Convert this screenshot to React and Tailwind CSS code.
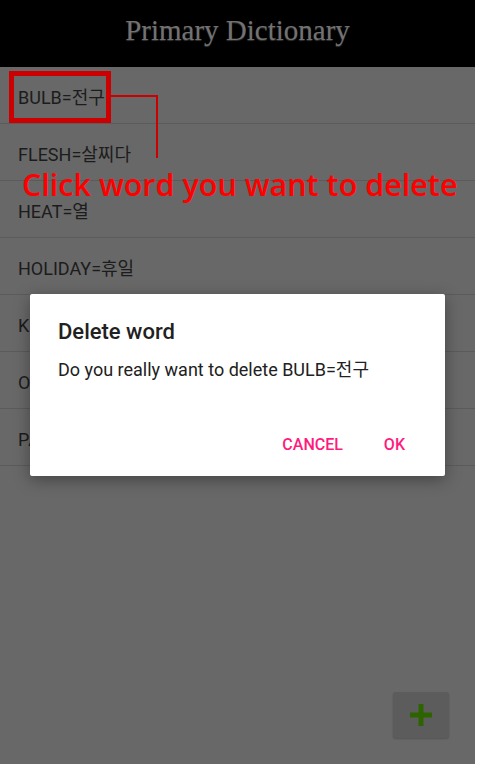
import React from "react";

const words = [
  "BULB=전구",
  "FLESH=살찌다",
  "HEAT=열",
  "HOLIDAY=휴일",
  "KNIFE=칼",
  "OCEAN=바다",
  "PAPER=종이",
];

const App = () => {
  return (
    <div className="w-[480px] h-[764px] bg-white overflow-hidden">
      <div className="relative w-[475px] h-[764px] bg-[#686868] flex flex-col font-['Roboto','Noto_Sans_CJK_KR',sans-serif]">
        {/* action bar */}
        <div className="h-[67px] shrink-0 bg-black flex items-center justify-center pb-[5px]">
          <div className="font-['Liberation_Serif',serif] text-[29px] text-[#727272] [text-shadow:0_1px_1px_#333]">
            Primary Dictionary
          </div>
        </div>

        {/* word list */}
        <div className="flex flex-col">
          {words.map((w) => (
            <div key={w} className="h-[57px] flex items-center pl-[18px] pt-[4px] border-b border-[#5b5b5b] text-[18px] text-[#1c1c1c]">
              {w}
            </div>
          ))}
        </div>

        {/* annotation */}
        <div className="absolute left-[9px] top-[71px] w-[102px] h-[52px] border-[5px] border-[#cc0000]"></div>
        <div className="absolute left-[111px] top-[95px] w-[47px] h-[2px] bg-[#cc0000]"></div>
        <div className="absolute left-[156px] top-[95px] w-[2px] h-[63px] bg-[#cc0000]"></div>
        <div className="absolute left-[22px] top-[164px] font-['Open_Sans',sans-serif] font-semibold text-[30.5px] leading-[40px] text-[#ff0000] whitespace-nowrap">
          Click word you want to delete
        </div>

        {/* dialog */}
        <div className="absolute left-[30px] top-[294px] w-[415px] h-[182px] bg-white rounded-[2px] shadow-[0_4px_16px_rgba(0,0,0,0.35)] flex flex-col">
          <div className="pl-[28px] pt-[23px] text-[22px] font-medium text-[#212121] leading-[30px]">Delete word</div>
          <div className="pl-[28px] pt-[11px] text-[18px] text-[#212121] leading-[24px]">
            Do you really want to delete BULB=전구
          </div>
          <div className="mt-auto mb-[19px] flex justify-end items-center gap-[41px] pr-[40px]">
            <div className="text-[16px] font-medium text-[#ff1a7d]">CANCEL</div>
            <div className="text-[16px] font-medium text-[#ff1a7d]">OK</div>
          </div>
        </div>

        {/* add button */}
        <div className="absolute left-[393px] top-[692px] w-[56px] h-[46px] rounded-[3px] bg-[#5c5c5c] shadow-[0_1px_2px_rgba(0,0,0,0.2)] flex items-center justify-center">
          <svg width="22" height="22" viewBox="0 0 22 22">
            <rect x="8.5" y="0" width="5" height="22" fill="#2d6400" />
            <rect x="0" y="8.5" width="22" height="5" fill="#2d6400" />
          </svg>
        </div>
      </div>
    </div>
  );
};

export default App;
